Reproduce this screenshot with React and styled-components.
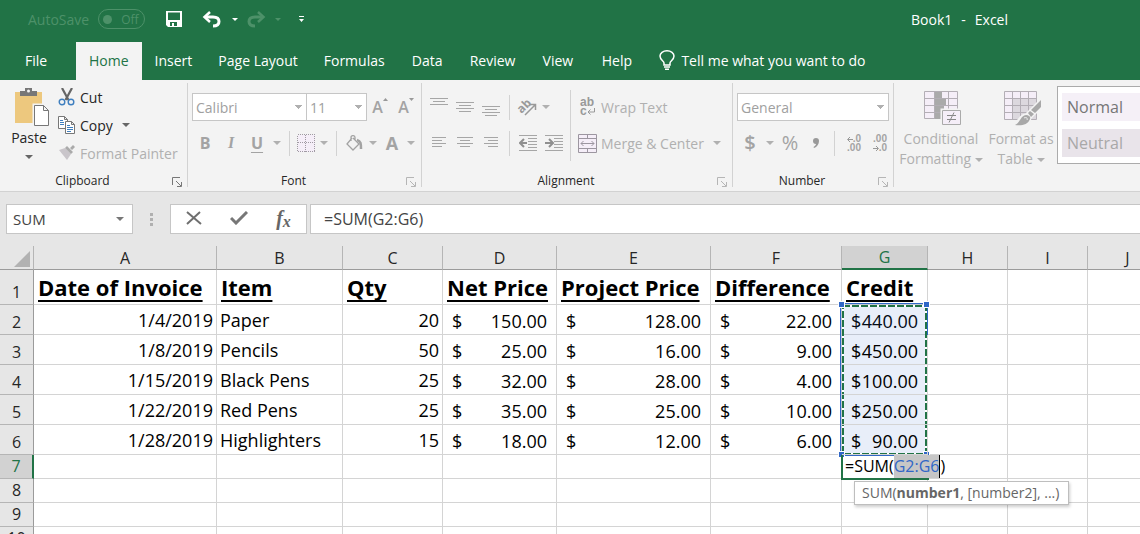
import React from 'react'
import styled, { createGlobalStyle, css } from 'styled-components'

const columns = [
  { name: 'A', width: 183 },
  { name: 'B', width: 126 },
  { name: 'C', width: 100 },
  { name: 'D', width: 114 },
  { name: 'E', width: 154 },
  { name: 'F', width: 131 },
  { name: 'G', width: 86 },
  { name: 'H', width: 80 },
  { name: 'I', width: 80 },
  { name: 'J' },
]

const titles = ['Date of Invoice', 'Item', 'Qty', 'Net Price', 'Project Price', 'Difference', 'Credit']

const invoices = [
  ['1/4/2019', 'Paper', '20', '150.00', '128.00', '22.00', '440.00'],
  ['1/8/2019', 'Pencils', '50', '25.00', '16.00', '9.00', '450.00'],
  ['1/15/2019', 'Black Pens', '25', '32.00', '28.00', '4.00', '100.00'],
  ['1/22/2019', 'Red Pens', '25', '35.00', '25.00', '10.00', '250.00'],
  ['1/28/2019', 'Highlighters', '15', '18.00', '12.00', '6.00', '90.00'],
]

const tabs = ['Home', 'Insert', 'Page Layout', 'Formulas', 'Data', 'Review', 'View', 'Help']

// horizontal strokes of an alignment icon, [x1, x2] for each line
function Lines({ rows, top = 0 }) {
  return (
    <svg width="18" height="18" stroke="#a6a6a6" shapeRendering="crispEdges">
      {rows.map(([a, b], i) => (
        <line key={i} x1={a} x2={b} y1={top + i * 3 + 0.5} y2={top + i * 3 + 0.5} />
      ))}
    </svg>
  )
}

function Indent({ right }) {
  return (
    <svg width="18" height="18" stroke="#a6a6a6" fill="none">
      <path d="M0 1.5h18M9 4.5h9M9 7.5h9M9 10.5h9M9 13.5h9M0 16.5h18" shapeRendering="crispEdges" />
      <path d={right ? 'M0 9h7M4 5l4 4-4 4' : 'M8 9H1M5 5L1 9l4 4'} stroke="#8f8f8f" strokeWidth="2" />
    </svg>
  )
}

function Arrow({ right }) {
  return (
    <svg width="6" height="5" fill="none" stroke="#999">
      <path d={right ? 'M0 2.500h5M3 0l2.500 2.500L3 5' : 'M6 2.500H1M3 0L.5 2.500 3 5'} />
    </svg>
  )
}

function Launcher({ dark, label }) {
  return (
    <LaunchButton aria-label={label}>
      <svg width="10" height="10" fill="none" stroke={dark ? '#777' : '#b5b5b5'}>
        <path d="M.5 8V.5H8M4 4l5 5M9.500 5v4.500H5" />
      </svg>
    </LaunchButton>
  )
}

function Undo({ flip }) {
  return (
    <svg width="19" height="17" fill="none" stroke={flip ? '#4d9169' : '#fff'} strokeWidth="3">
      <g transform={flip ? 'translate(19 0) scale(-1 1)' : undefined}>
        <path d="M3 6h8c4 0 6 2 6 4.500 0 3-2 4.500-6 4.500" />
        <path d="M8 1L2.500 6 8 11" strokeWidth="2.500" />
      </g>
    </svg>
  )
}

function TitleBar() {
  return (
    <Top>
      <AutoSave>
        AutoSave
        <Toggle>
          <input type="checkbox" />
          Off
        </Toggle>
      </AutoSave>
      <QuickButton $w={34} aria-label="Save">
        <svg width="16" height="16">
          <path fill="#fff" fillRule="evenodd" d="M0 0h16v16H2l-2-2zM2 1.500V9h12V1.500zM4 11v4h2v-3h2v3h3v-4z" />
        </svg>
      </QuickButton>
      <QuickButton $w={40} aria-label="Undo"><Undo /></QuickButton>
      <QuickButton $w={8} aria-label="Undo history"><Caret $small $c="#fff" /></QuickButton>
      <QuickButton $w={34} aria-label="Redo"><Undo flip /></QuickButton>
      <QuickButton $w={10} aria-label="Redo history"><Caret $small $c="#4d9169" /></QuickButton>
      <QuickButton $w={36} aria-label="Customize toolbar">
        <svg width="5" height="6" fill="#fff"><path d="M0 0h5v1H0zM0 3h5L2.500 6z" /></svg>
      </QuickButton>
      <BookName>
        <span>Book1</span>
        <span>-</span>
        <span>Excel</span>
      </BookName>
    </Top>
  )
}

function Clipboard() {
  return (
    <Group $w={188}>
      <ClipTools>
        <PasteButton>
          <svg width="36" height="40">
            <path fill="#edc87e" d="M1 5h27v31H1z" />
            <path fill="#777" d="M6 4h5V1h7v3h5v5H6z" />
            <circle cx="14.500" cy="4" r="1.500" fill="#f3f3f3" />
            <path fill="#fff" stroke="#f3f3f3" strokeWidth="4" d="M20.500 18.500h9l5 5v15h-14z" />
            <path fill="#fff" stroke="#777" d="M20.500 18.500h9l5 5v15h-14zM29.500 18.500v5h5" />
          </svg>
          Paste
          <Caret $c="#666" />
        </PasteButton>
        <Stack>
          <LabelButton $h={28}>
            <svg width="18" height="18" fill="none">
              <path d="M4 0l6.500 12M14 0L7.500 12" stroke="#666" strokeWidth="2.200" />
              <circle cx="4" cy="14" r="2.800" stroke="#3f7fbf" strokeWidth="1.400" />
              <circle cx="13" cy="14" r="2.800" stroke="#3f7fbf" strokeWidth="1.400" />
            </svg>
            Cut
          </LabelButton>
          <LabelButton $h={28}>
            <svg width="18" height="18" fill="#fff" stroke="#777">
              <path d="M.5.5h6l3 3v9h-9zM6.500.5v3h3" />
              <path d="M2 4.500h3M2 6.500h4M2 8.500h4" stroke="#3f7fbf" />
              <path d="M7.500 5.500h6l3 3v9h-9zM13.500 5.500v3h3" />
              <path d="M9 9.500h3M9 11.500h6M9 13.500h6M9 15.500h4" stroke="#3f7fbf" />
            </svg>
            Copy
            <Caret $c="#666" />
          </LabelButton>
          <LabelButton $h={28} $off>
            <svg width="18" height="16">
              <path fill="#c9c5ca" d="M1 5l6-2 6 6-4 6z" />
              <path fill="#aaa" d="M7 3l2-2 6 6-2 2zM12 3l3-3 2 2-3 3z" />
            </svg>
            Format Painter
          </LabelButton>
        </Stack>
      </ClipTools>
      <GroupName>Clipboard<Launcher dark label="Clipboard options" /></GroupName>
    </Group>
  )
}

function FontGroup() {
  return (
    <Group $w={234}>
      <Tools>
        <Line>
          <Picker $w={115} aria-label="Font" defaultValue="Calibri"><option>Calibri</option></Picker>
          <Picker $w={61} aria-label="Font size" defaultValue="11"><option>11</option></Picker>
          <Tool $w={26} $bold aria-label="Grow font">
            A
            <svg width="5" height="3" fill="#999"><path d="M0 3h5L2.500 0z" /></svg>
          </Tool>
          <Tool $w={26} $bold aria-label="Shrink font">
            A
            <svg width="5" height="3" fill="#999"><path d="M0 0h5L2.500 3z" /></svg>
          </Tool>
        </Line>
        <Line>
          <Letter $w={26}>B</Letter>
          <Letter $w={26} $italic>I</Letter>
          <Letter $w={26} $under>U</Letter>
          <Drop />
          <Rule />
          <Tool $w={22} aria-label="Borders">
            <svg width="18" height="18" fill="#f5eef8" stroke="#a09aa3" strokeDasharray="1 1" shapeRendering="crispEdges">
              <path d="M.5.5h17v17H.5zM.5 8.500h17M8.500 .5v17" />
            </svg>
          </Tool>
          <Drop />
          <Rule />
          <Tool $w={24} aria-label="Fill color">
            <svg width="17" height="17" fill="none" stroke="#a3a3a3" strokeWidth="1.300">
              <path d="M6 3L1 9l6 6 6-6-6-6M5 6V2.500C5 0 9 0 9 2.500V6" />
              <path d="M11 5c4 1 4 4 4 9" strokeWidth="2.500" />
            </svg>
          </Tool>
          <Drop />
          <Letter $w={24} $big>A</Letter>
          <Drop />
        </Line>
      </Tools>
      <GroupName>Font<Launcher label="Font options" /></GroupName>
    </Group>
  )
}

function Alignment() {
  return (
    <Group $w={311}>
      <AlignTools>
        <Tools>
          <Line>
            <Tool $w={26} aria-label="Top align"><Lines top={0} rows={[[0, 18], [3, 15], [0, 18]]} /></Tool>
            <Tool $w={26} aria-label="Middle align"><Lines top={4} rows={[[0, 18], [3, 15], [0, 18], [3, 15]]} /></Tool>
            <Tool $w={26} aria-label="Bottom align"><Lines top={8} rows={[[0, 18], [3, 15], [0, 18], [3, 15]]} /></Tool>
            <Rule />
            <Tool $w={24} aria-label="Orientation">
              <svg width="20" height="20" fill="none" stroke="#999" overflow="visible">
                <text x="0" y="14" transform="rotate(-45 6 10)" fill="#999" stroke="none" fontSize="12" fontWeight="700">ab</text>
                <path d="M8 18L18 8M13 7.500h5.500V13" strokeWidth="1.500" />
              </svg>
            </Tool>
            <Drop />
          </Line>
          <Line>
            <Tool $w={26} aria-label="Align left"><Lines top={3} rows={[[2, 16], [2, 12], [2, 16], [2, 12]]} /></Tool>
            <Tool $w={26} aria-label="Center"><Lines top={3} rows={[[1, 17], [4, 14], [1, 17], [4, 14]]} /></Tool>
            <Tool $w={26} aria-label="Align right"><Lines top={3} rows={[[2, 16], [6, 16], [2, 16], [6, 16]]} /></Tool>
            <Rule />
            <Tool $w={26} aria-label="Decrease indent"><Indent /></Tool>
            <Tool $w={26} aria-label="Increase indent"><Indent right /></Tool>
          </Line>
        </Tools>
        <LongRule />
        <Tools>
          <LabelButton $h={28} $off>
            <WrapMark>
              <span>ab</span>
              <span>
                c
                <svg width="8" height="7" fill="none" stroke="#999"><path d="M7.500 0v4H1M3.500 1.500L1 4l2.500 2.500" /></svg>
              </span>
            </WrapMark>
            Wrap Text
          </LabelButton>
          <LabelButton $h={28} $off>
            <svg width="19" height="19" fill="#f5eef8" stroke="#9c96a0">
              <path d="M.5.5h18v18H.5zM.5 4.500h18M.5 14.500h18M9.500.5v4M9.500 14.500v4" />
              <path d="M3 9.500h13M5.500 7L3 9.500 5.500 12M13.500 7L16 9.500 13.500 12" fill="none" />
            </svg>
            Merge &amp; Center
            <Caret $c="#b0b0b0" />
          </LabelButton>
        </Tools>
      </AlignTools>
      <GroupName>Alignment<Launcher label="Alignment options" /></GroupName>
    </Group>
  )
}

function NumberGroup() {
  return (
    <Group $w={161}>
      <Tools>
        <Line>
          <Picker $w={152} aria-label="Number format" defaultValue="General"><option>General</option></Picker>
        </Line>
        <Line>
          <Sign $w={26} $heavy>$</Sign>
          <Drop />
          <Sign $w={26}>%</Sign>
          <Tool $w={26} aria-label="Comma style">
            <svg width="6" height="10" fill="#999"><path d="M3 0c2 0 3 1 3 3 0 3-2 6-5 7l-.5-1C2 8 3 7 3 6 1 6 0 5 0 3s1-3 3-3z" /></svg>
          </Tool>
          <Rule />
          <Decimal aria-label="Increase decimal">
            <span><Arrow />.0</span>
            <span>.00</span>
          </Decimal>
          <Decimal aria-label="Decrease decimal">
            <span>.00</span>
            <span><Arrow right />.0</span>
          </Decimal>
        </Line>
      </Tools>
      <GroupName>Number<Launcher label="Number options" /></GroupName>
    </Group>
  )
}

function StylesGroup() {
  return (
    <StylesPanel>
      <StyleButton $w={86}>
        <svg width="38" height="36" fill="#f5eef8" stroke="#b3aeb5">
          <path d="M.5.5h33v27H.5zM.5 7.500h33M.5 14.500h33M.5 21.500h33M10.500.5v27M17.500.5v27M24.500.5v27" />
          <path fill="#aaa" stroke="none" d="M11 1h7v6h-7zM11 8h11v6H11zM11 15h9v6h-9zM11 22h6v6h-6z" />
          <path stroke="#f3f3f3" strokeWidth="4" d="M18.500 19.500h18v14h-18z" />
          <path stroke="#aaa" d="M18.500 19.500h18v14h-18z" />
          <path stroke="#888" d="M23 24.500h9M23 28.500h9M30 21.500l-5 10" />
        </svg>
        <span>Conditional</span>
        <span>Formatting <Caret $c="#b0b0b0" /></span>
      </StyleButton>
      <StyleButton $w={74}>
        <svg width="38" height="36" fill="#f5eef8" stroke="#b3aeb5">
          <path d="M.5.5h32v28H.5z" />
          <path fill="#dcd8de" stroke="none" d="M9 8h23v20H9z" />
          <path d="M.5 7.500h32M.5 14.500h32M.5 21.500h32M8.500.5v28M16.500.5v28M24.500.5v28" />
          <path stroke="#f3f3f3" strokeWidth="3" fill="#f3f3f3" d="M37 9L26 20l-4 4c-6 0-6 6-12 10 8 2 15 0 16-7l11-11z" />
          <path stroke="none" fill="#a8a8a8" d="M37 9v7l-6 6-4-3zM26 20l4 3-3 3-3-4zM22 24c3 0 5 2 4 4-2 6-9 7-15 6 6-3 5-9 11-10z" />
          <path stroke="#f3f3f3" fill="none" d="M20 27c2-1 4 0 3 2" />
        </svg>
        <span>Format as</span>
        <span>Table <Caret $c="#b0b0b0" /></span>
      </StyleButton>
      <Gallery>
        <Swatch>Normal</Swatch>
        <Swatch $neutral>Neutral</Swatch>
      </Gallery>
    </StylesPanel>
  )
}

function FormulaBar() {
  return (
    <BarRow>
      <NameBox>
        <input aria-label="Name box" defaultValue="SUM" />
        <Caret $c="#777" />
      </NameBox>
      <Grip><i /><i /><i /></Grip>
      <Actions>
        <button aria-label="Cancel">
          <svg width="16" height="14" fill="none" stroke="#6f6f6f" strokeWidth="2"><path d="M1 1l14 12M14 1L1 13" /></svg>
        </button>
        <button aria-label="Enter">
          <svg width="18" height="14" fill="none" stroke="#777" strokeWidth="3"><path d="M1 7l5 5L17 1" /></svg>
        </button>
        <FxButton aria-label="Insert function">f<sub>x</sub></FxButton>
      </Actions>
      <FormulaInput aria-label="Formula" defaultValue="=SUM(G2:G6)" />
    </BarRow>
  )
}

function Marquee() {
  return (
    <Selection>
      <svg width="100%" height="100%">
        <rect x="2" y="2" width="83" height="148" fill="none" stroke="#fff" strokeWidth="2" />
        <rect x="2" y="2" width="83" height="148" fill="none" stroke="#217346" strokeWidth="2" strokeDasharray="7 2" />
      </svg>
      <Handle $x="left" $y="top" />
      <Handle $x="right" $y="top" />
      <Handle $x="left" $y="bottom" />
      <Handle $x="right" $y="bottom" />
    </Selection>
  )
}

function Sheet() {
  return (
    <SheetArea>
      <Grid>
        <colgroup>
          <Col $w={34} />
          {columns.map(c => <Col key={c.name} $w={c.width} />)}
        </colgroup>
        <thead>
          <tr>
            <Corner aria-label="Select all"><svg width="16" height="16" fill="#b2b2b2"><path d="M16 0v16H0z" /></svg></Corner>
            {columns.map(c => <ColHead key={c.name} $active={c.name === 'G'}>{c.name}</ColHead>)}
          </tr>
        </thead>
        <tbody>
          <Row $h={35}>
            <RowHead>1</RowHead>
            {titles.map(t => <Cell key={t}><Title>{t}</Title></Cell>)}
            <Cell /><Cell /><Cell />
          </Row>
          {invoices.map((r, i) => (
            <Row key={r[0]} $h={30}>
              <RowHead>{i + 2}</RowHead>
              <Cell $right>{r[0]}</Cell>
              <Cell>{r[1]}</Cell>
              <Cell $right>{r[2]}</Cell>
              {r.slice(3).map((v, n) => (
                <Cell key={n} $picked={n === 3}>
                  <Money><span>$</span><span>{v}</span></Money>
                  {i === 0 && n === 3 && <Marquee />}
                </Cell>
              ))}
              <Cell /><Cell /><Cell />
            </Row>
          ))}
          <Row $h={24}>
            <RowHead $active>7</RowHead>
            <Cell /><Cell /><Cell /><Cell /><Cell /><Cell />
            <Cell $picked>
              <Editor>=SUM(<mark>G2:G6</mark>)</Editor>
              <Hint>SUM(<b>number1</b>, [number2], ...)</Hint>
            </Cell>
            <Cell /><Cell /><Cell />
          </Row>
          {[8, 9, 10].map(n => (
            <Row key={n} $h={24}>
              <RowHead>{n}</RowHead>
              {columns.map(c => <Cell key={c.name} />)}
            </Row>
          ))}
        </tbody>
      </Grid>
    </SheetArea>
  )
}

function App() {
  return (
    <Container>
      <GlobalStyle />
      <TitleBar />
      <Tabs>
        <Tab $file>File</Tab>
        {tabs.map(t => <Tab key={t} $on={t === 'Home'}>{t}</Tab>)}
        <Tab>
          <svg width="16" height="20" fill="none" stroke="#fff" strokeWidth="1.500">
            <path d="M5 15v-2c0-2-4-3-4-7 0-3 3-5.200 7-5.200S15 3 15 6c0 4-4 5-4 7v2zM5 17h6M6 19.200h4" />
          </svg>
          Tell me what you want to do
        </Tab>
      </Tabs>
      <Ribbon>
        <Clipboard />
        <FontGroup />
        <Alignment />
        <NumberGroup />
        <StylesGroup />
      </Ribbon>
      <FormulaBar />
      <Sheet />
    </Container>
  )
}

export default App

const GlobalStyle = createGlobalStyle`
  * {
    box-sizing: border-box;
  }
  body {
    margin: 0;
    font-family: "Open Sans", sans-serif;
    font-size: 14px;
    color: #262626;
  }
  button, input, select {
    font: inherit;
    color: inherit;
    border: 0;
    padding: 0;
    margin: 0;
    background: none;
  }
`

const Container = styled.div`
  display: flex;
  flex-direction: column;
  height: 100vh;
  overflow: hidden;
`

const Top = styled.header`
  display: flex;
  align-items: center;
  height: 42px;
  padding: 0 132px 4px 28px;
  background: #217346;
  color: #fff;
`
const AutoSave = styled.div`
  display: flex;
  align-items: center;
  gap: 9px;
  margin-right: 12px;
  color: #4d9169;
`
const Toggle = styled.label`
  display: flex;
  align-items: center;
  gap: 9px;
  width: 47px;
  height: 20px;
  padding-left: 4px;
  border: 1px solid #4d9169;
  border-radius: 10px;
  font-size: 12px;

  input {
    appearance: none;
    width: 9px;
    height: 9px;
    border-radius: 50%;
    background: #4d9169;
  }
`
const QuickButton = styled.button`
  display: flex;
  align-items: center;
  justify-content: center;
  width: ${p => p.$w}px;
`
const BookName = styled.div`
  display: flex;
  gap: 9px;
  margin-left: auto;
`

const Caret = styled.i`
  display: inline-block;
  flex: none;
  border: ${p => (p.$small ? 3 : 4)}px solid transparent;
  border-top-color: ${p => p.$c};
  border-bottom: 0;
`

const Tabs = styled.nav`
  display: flex;
  height: 38px;
  background: #217346;
`
const Tab = styled.button`
  display: flex;
  align-items: center;
  justify-content: center;
  gap: 6px;
  min-width: 59px;
  padding: 0 13px 2px;
  white-space: nowrap;
  color: ${p => (p.$on ? '#217346' : '#fff')};
  background: ${p => (p.$on ? '#f3f3f3' : 'none')};
  ${p => p.$file && css`
    justify-content: flex-start;
    width: 76px;
    padding-left: 25px;
  `}
`

const Ribbon = styled.section`
  display: flex;
  flex: none;
  height: 112px;
  padding: 3px 0 4px;
  background: #f3f3f3;
  border-bottom: 1px solid #d2d2d2;
  overflow: hidden;
`
const Group = styled.div`
  display: flex;
  flex-direction: column;
  justify-content: space-between;
  flex: none;
  width: ${p => p.$w}px;
  border-right: 1px solid #d2d2d2;
`
const GroupName = styled.div`
  position: relative;
  padding-right: 22px;
  text-align: center;
  font-size: 12px;
  line-height: 12px;
`
const LaunchButton = styled.button`
  position: absolute;
  right: 5px;
  bottom: 0;
  display: flex;
`
const ClipTools = styled.div`
  display: flex;
  gap: 8px;
  height: 84px;
  padding-left: 8px;
`
const Stack = styled.div`
  display: flex;
  flex-direction: column;
`
const PasteButton = styled.button`
  display: flex;
  flex-direction: column;
  align-items: center;
  width: 42px;
  padding-top: 4px;

  svg {
    align-self: flex-end;
    margin-bottom: 1px;
  }
  i {
    margin-top: 8px;
  }
`
const LabelButton = styled.button`
  display: flex;
  align-items: center;
  gap: 4px;
  height: ${p => p.$h}px;
  white-space: nowrap;
  color: ${p => (p.$off ? '#b0b0b0' : 'inherit')};

  i {
    margin-left: 5px;
  }
`
const WrapMark = styled.span`
  display: flex;
  flex-direction: column;
  width: 19px;
  padding-left: 2px;
  text-align: left;
  font: 700 12px/9px "Liberation Sans", sans-serif;
  color: #999;
`
const Tools = styled.div`
  display: flex;
  flex-direction: column;
  gap: 8px;
  padding: 10px 0 0 4px;
`
const Line = styled.div`
  display: flex;
  align-items: center;
  height: 28px;
`
const Picker = styled.select`
  appearance: none;
  width: ${p => p.$w}px;
  height: 28px;
  padding-left: 3px;
  border: 1px solid #c6c6c6;
  color: #a0a0a0;
  background: linear-gradient(225deg, #b0b0b0 50%, transparent 50%) no-repeat right 7px center / 4px 4px,
    linear-gradient(135deg, #b0b0b0 50%, transparent 50%) no-repeat right 3px center / 4px 4px, #fff;

  & + & {
    margin-left: -1px;
  }
`
const Tool = styled.button`
  display: flex;
  align-items: center;
  justify-content: center;
  width: ${p => p.$w}px;
  height: 26px;
  color: #a3a3a3;
  ${p => p.$bold && css`
    font-weight: 600;
    font-size: 16px;

    svg {
      align-self: flex-start;
      margin-top: 4px;
    }
  `}
`
const Letter = styled(Tool)`
  font-size: ${p => (p.$big ? 18 : 16)}px;
  font-weight: 700;
  font-style: ${p => (p.$italic ? 'italic' : 'normal')};
  font-family: ${p => (p.$italic ? '"Liberation Serif", serif' : 'inherit')};
  text-decoration: ${p => (p.$under ? 'underline' : 'none')};
  text-underline-offset: 3px;
`
const Sign = styled(Tool)`
  font-size: 20px;
  line-height: 20px;
  font-weight: ${p => (p.$heavy ? 600 : 400)};
`
const DropButton = styled.button`
  display: flex;
  justify-content: center;
  width: 14px;
`
function Drop() {
  return <DropButton aria-label="More"><Caret $c="#b0b0b0" /></DropButton>
}
const Rule = styled.div`
  width: 1px;
  height: 25px;
  margin: 0 5px;
  background: #d2d2d2;
`
const LongRule = styled.div`
  width: 1px;
  height: 71px;
  margin: 7px 3px 0;
  background: #d2d2d2;
`
const AlignTools = styled.div`
  display: flex;
`
const Decimal = styled.button`
  display: flex;
  flex-direction: column;
  align-items: flex-end;
  width: 26px;
  padding-right: 5px;
  font: 700 10px/9px "Liberation Sans", sans-serif;
  color: #a3a3a3;
`
const StylesPanel = styled.div`
  display: flex;
  align-items: flex-start;
  flex: 1;
  padding-left: 4px;
`
const StyleButton = styled.button`
  display: flex;
  flex-direction: column;
  align-items: center;
  flex: none;
  width: ${p => p.$w}px;
  padding-top: 8px;
  line-height: 20px;
  white-space: nowrap;
  color: #b0b0b0;

  svg {
    margin: 0 0 2px 4px;
  }
  i {
    vertical-align: middle;
  }
`
const Gallery = styled.div`
  display: flex;
  flex-direction: column;
  gap: 8px;
  flex: 1;
  height: 78px;
  margin: 3px 0 0 -1px;
  padding: 6px 0 6px 4px;
  border: 1px solid #ababab;
  border-right: 0;
  background: #fff;
`
const Swatch = styled.button`
  height: 28px;
  padding-left: 5px;
  text-align: left;
  font-size: 16px;
  color: ${p => (p.$neutral ? '#a8a8a8' : '#767676')};
  background: ${p => (p.$neutral ? '#e9e4ea' : '#f5f0f7')};
`

const BarRow = styled.div`
  display: flex;
  flex: none;
  height: 54px;
  padding: 12px 0 12px 6px;
  background: #e6e6e6;
  color: #444;
`
const NameBox = styled.div`
  display: flex;
  align-items: center;
  width: 127px;
  padding: 0 8px 0 6px;
  border: 1px solid #c6c6c6;
  background: #fff;
  font-size: 15px;

  input {
    flex: 1;
    min-width: 0;
  }
`
const Grip = styled.div`
  display: flex;
  flex-direction: column;
  align-items: center;
  justify-content: center;
  gap: 2px;
  width: 37px;

  i {
    width: 3px;
    height: 3px;
    background: #b0b0b0;
  }
`
const Actions = styled.div`
  display: flex;
  width: 137px;
  border: 1px solid #c6c6c6;
  background: #fff;

  button {
    flex: 1;
  }
`
const FxButton = styled.button`
  font: italic 600 20px "Liberation Serif", serif;
  color: #666;

  sub {
    font-size: 16px;
    vertical-align: -2px;
  }
`
const FormulaInput = styled.input`
  flex: 1;
  margin-left: 3px;
  padding-left: 13px;
  border: 1px solid #c6c6c6;
  border-right: 0;
  background: #fff;
  font-size: 16px;
`

const SheetArea = styled.main`
  flex: 1;
  min-height: 0;
  overflow: hidden;
`
const Grid = styled.table`
  width: 100%;
  min-width: 1168px;
  table-layout: fixed;
  border-spacing: 0;
  font-size: 18px;
  color: #000;
`
const Col = styled.col`
  width: ${p => (p.$w ? p.$w + 'px' : 'auto')};
`
const headCell = css`
  padding: 0;
  font-weight: 400;
  font-size: 16px;
  background: #e6e6e6;
  color: #262626;
`
const Corner = styled.td`
  ${headCell}
  height: 24px;
  text-align: right;
  border-right: 1px solid #b5b5b5;
  border-bottom: 1px solid #9b9b9b;

  svg {
    display: block;
    margin: 2px 3px 0 auto;
  }
`
const ColHead = styled.th`
  ${headCell}
  line-height: 22px;
  border-right: 1px solid #b5b5b5;
  border-bottom: 1px solid #9b9b9b;
  ${p => p.$active && css`
    color: #217346;
    background: #d2d2d2;
    border-bottom: 2px solid #217346;
  `}
`
const Row = styled.tr`
  height: ${p => p.$h}px;
`
const RowHead = styled.th.attrs({ scope: 'row' })`
  ${headCell}
  padding-bottom: 1px;
  vertical-align: bottom;
  line-height: 22px;
  border-right: 1px solid #9b9b9b;
  border-bottom: 1px solid #b5b5b5;
  ${p => p.$active && css`
    color: #217346;
    background: #d2d2d2;
    border-right: 2px solid #217346;
  `}
`
const Cell = styled.td`
  position: ${p => (p.$picked ? 'relative' : 'static')};
  padding: 0 3px;
  line-height: 22px;
  white-space: nowrap;
  text-align: ${p => (p.$right ? 'right' : 'left')};
  border-right: 1px solid #d4d4d4;
  border-bottom: 1px solid #d4d4d4;
`
const Title = styled.b`
  display: block;
  padding-left: 1px;
  font-size: 22px;
  line-height: 32px;
  text-decoration: underline 2px;
  text-underline-offset: 4px;
  text-decoration-skip-ink: none;
`
const Money = styled.div`
  display: flex;
  justify-content: space-between;
  padding: 2px 6px 0;
`
const Selection = styled.div`
  position: absolute;
  top: -2px;
  left: -2px;
  width: 88px;
  height: 153px;
  border: 1px solid #3067c7;
  background: rgba(48, 103, 199, 0.11);

  svg {
    display: block;
  }
`
const Handle = styled.span`
  position: absolute;
  ${p => p.$x}: -2px;
  ${p => p.$y}: -2px;
  width: 5px;
  height: 5px;
  background: #3067c7;
  box-shadow: 0 0 0 1px #fff;
`
const Editor = styled.div`
  position: absolute;
  top: 0;
  left: -1px;
  padding-left: 2px;
  border-left: 2px solid #217346;
  font-size: 16px;
  line-height: 23px;

  &::after {
    content: '';
    position: absolute;
    left: -2px;
    bottom: -2px;
    width: 88px;
    height: 2px;
    background: #217346;
  }
  mark {
    display: inline-block;
    border-right: 1px solid #000;
    background: #c6c6c6;
    color: #3067c7;
  }
`
const Hint = styled.div`
  position: absolute;
  top: 26px;
  left: 12px;
  padding: 0 9px 0 7px;
  border: 1px solid #bebebe;
  background: #fff;
  box-shadow: 1px 2px 3px rgba(0, 0, 0, 0.2);
  font-size: 14px;
  line-height: 22px;
  color: #666;
`
